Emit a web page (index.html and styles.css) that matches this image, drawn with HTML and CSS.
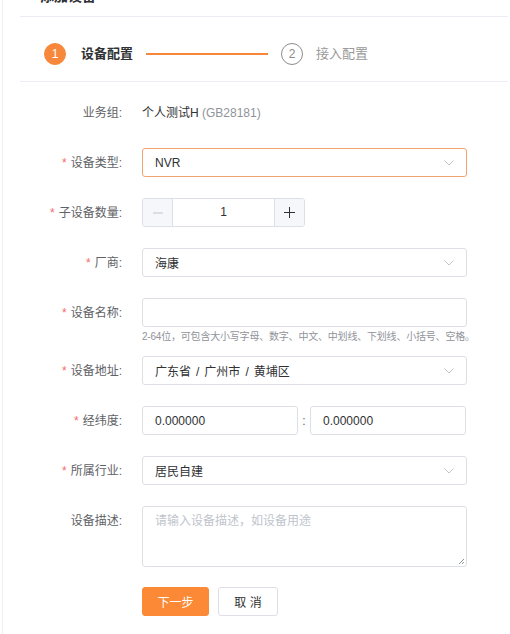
FILE: index.html
```html
<!DOCTYPE html>
<html lang="zh-CN">
<head>
<meta charset="utf-8">
<title>添加设备</title>
<link rel="stylesheet" href="styles.css">
</head>
<body>
<div class="page">
  <div class="header"><span class="title">添加设备</span></div>
  <div class="steps">
    <span class="step-num active">1</span>
    <span class="step-text active">设备配置</span>
    <span class="step-line"></span>
    <span class="step-num">2</span>
    <span class="step-text">接入配置</span>
  </div>
  <div class="form">
    <div class="row">
      <div class="label">业务组:</div>
      <div class="control plain"><span class="val">个人测试H</span> <span class="muted">(GB28181)</span></div>
    </div>
    <div class="row">
      <div class="label req">设备类型:</div>
      <div class="control">
        <div class="input select focus"><span class="val">NVR</span><svg class="arrow" viewBox="0 0 10 6" width="10" height="6"><path d="M0.5 0.5 L5 5 L9.5 0.5" fill="none" stroke="#c0c4cc" stroke-width="1"/></svg></div>
      </div>
    </div>
    <div class="row">
      <div class="label req">子设备数量:</div>
      <div class="control">
        <div class="number">
          <span class="nbtn minus"><svg viewBox="0 0 10 10" width="10" height="10"><path d="M0 5 H10" stroke="#c0c4cc" stroke-width="1"/></svg></span>
          <span class="nval">1</span>
          <span class="nbtn plus"><svg viewBox="0 0 11 11" width="11" height="11"><path d="M0 5.5 H11 M5.5 0 V11" stroke="#303133" stroke-width="1"/></svg></span>
        </div>
      </div>
    </div>
    <div class="row">
      <div class="label req">厂商:</div>
      <div class="control">
        <div class="input select"><span class="val">海康</span><svg class="arrow" viewBox="0 0 10 6" width="10" height="6"><path d="M0.5 0.5 L5 5 L9.5 0.5" fill="none" stroke="#c0c4cc" stroke-width="1"/></svg></div>
      </div>
    </div>
    <div class="row row-hint">
      <div class="label req">设备名称:</div>
      <div class="control">
        <div class="input"></div>
        <div class="hint">2-64位，可包含大小写字母、数字、中文、中划线、下划线、小括号、空格。</div>
      </div>
    </div>
    <div class="row">
      <div class="label req">设备地址:</div>
      <div class="control">
        <div class="input select"><span class="val">广东省<span class="sep">/</span>广州市<span class="sep">/</span>黄埔区</span><svg class="arrow" viewBox="0 0 10 6" width="10" height="6"><path d="M0.5 0.5 L5 5 L9.5 0.5" fill="none" stroke="#c0c4cc" stroke-width="1"/></svg></div>
      </div>
    </div>
    <div class="row">
      <div class="label req">经纬度:</div>
      <div class="control coords">
        <div class="input half"><span class="val">0.000000</span></div>
        <span class="colon">:</span>
        <div class="input half"><span class="val">0.000000</span></div>
      </div>
    </div>
    <div class="row">
      <div class="label req">所属行业:</div>
      <div class="control">
        <div class="input select"><span class="val">居民自建</span><svg class="arrow" viewBox="0 0 10 6" width="10" height="6"><path d="M0.5 0.5 L5 5 L9.5 0.5" fill="none" stroke="#c0c4cc" stroke-width="1"/></svg></div>
      </div>
    </div>
    <div class="row row-desc">
      <div class="label">设备描述:</div>
      <div class="control">
        <div class="textarea"><span class="placeholder">请输入设备描述，如设备用途</span><svg class="grip" viewBox="0 0 8 8" width="8" height="8"><path d="M7 2 L2 7 M7 5 L5 7" stroke="#909399" stroke-width="1"/></svg></div>
      </div>
    </div>
    <div class="actions">
      <button class="btn primary" type="button">下一步</button>
      <button class="btn" type="button">取 消</button>
    </div>
  </div>
</div>
</body>
</html>
```
FILE: styles.css
```css
* { box-sizing: border-box; }
html, body { margin: 0; padding: 0; background: #fff; }
body {
  font-family: "Liberation Sans", "Noto Sans CJK SC", sans-serif;
  font-size: 12px;
  color: #303133;
  overflow: hidden;
}
.page {
  margin-left: 2px;
  border-left: 1px solid #eef0f3;
  padding-left: 17px;
  padding-right: 2px;
  height: 634px;
}
.header {
  display: flex;
  align-items: flex-start;
  height: 17px;
  border-bottom: 1px solid #ebeef5;
}
.title {
  display: block;
  margin-top: -11px;
  padding-left: 20px;
  font-size: 14px;
  line-height: 14px;
  font-weight: bold;
  color: #303133;
}
.steps {
  height: 65px;
  border-bottom: 1px solid #ebeef5;
  padding: 26px 0 0 24px;
  display: flex;
  align-items: flex-start;
}
.step-num {
  width: 22px;
  height: 22px;
  border-radius: 50%;
  border: 1.5px solid #8c8c8c;
  color: #8c8c8c;
  font-size: 12px;
  display: flex;
  align-items: center;
  justify-content: center;
}
.step-num.active {
  background: #f7873a;
  border-color: #f7873a;
  color: #fff;
}
.step-text {
  margin-left: 13px;
  font-size: 13px;
  line-height: 22px;
  color: #999;
}
.step-text.active {
  margin-left: 15px;
  color: #303133;
  font-weight: bold;
}
.step-line {
  width: 122px;
  height: 1.5px;
  background: #f7873a;
  margin: 10px 13px 0 13px;
}
.form {
  padding-top: 16px;
}
.row {
  display: flex;
  align-items: flex-start;
  margin-bottom: 20px;
}
.label {
  width: 102px;
  flex: none;
  text-align: right;
  line-height: 30px;
  font-size: 12px;
  color: #606266;
}
.label.req::before {
  content: "*";
  color: #f56c6c;
  margin-right: 4px;
}
.control {
  margin-left: 20px;
  width: 325px;
  flex: none;
}
.plain {
  line-height: 30px;
  font-size: 12px;
}
.plain .val { color: #303133; }
.muted { color: #909399; }
.input {
  height: 29px;
  border: 1px solid #dcdfe6;
  border-radius: 3px;
  display: flex;
  align-items: center;
  padding: 0 12px;
  background: #fff;
}
.input .val { flex: 1; color: #303133; font-size: 12px; }
.sep { margin: 0 5px; }
.input.focus { border-color: #f3a46e; }
.arrow { flex: none; }
.number {
  width: 163px;
  height: 29px;
  border: 1px solid #dcdfe6;
  border-radius: 3px;
  display: flex;
  overflow: hidden;
}
.nbtn {
  width: 30px;
  flex: none;
  background: #f5f7fa;
  display: flex;
  align-items: center;
  justify-content: center;
}
.nbtn.minus { border-right: 1px solid #dcdfe6; }
.nbtn.plus { border-left: 1px solid #dcdfe6; }
.nval {
  flex: 1;
  text-align: center;
  line-height: 27px;
  font-size: 12px;
  color: #303133;
}
.row-hint { margin-bottom: 10px; }
.hint {
  font-size: 10px;
  line-height: 19px;
  color: #909399;
  white-space: nowrap;
  letter-spacing: -0.2px;
}
.coords {
  display: flex;
  align-items: center;
}
.input.half { width: 156px; }
.colon {
  width: 12px;
  text-align: center;
  color: #606266;
}
.textarea {
  position: relative;
  height: 61px;
  border: 1px solid #dcdfe6;
  border-radius: 3px;
  padding: 6px 12px;
  line-height: 16px;
}
.placeholder { color: #c0c4cc; font-size: 12px; }
.grip { position: absolute; right: 1px; bottom: 1px; }
.actions {
  margin-left: 122px;
  display: flex;
  gap: 9px;
}
.btn {
  height: 29px;
  border-radius: 3px;
  font-family: "Liberation Sans", "Noto Sans CJK SC", sans-serif;
  font-size: 12px;
  border: 1px solid #dcdfe6;
  background: #fff;
  color: #303133;
  padding: 0;
  width: 60px;
}
.btn.primary {
  width: 67px;
  background: #fb8936;
  border-color: #fb8936;
  color: #fff;
}
```
